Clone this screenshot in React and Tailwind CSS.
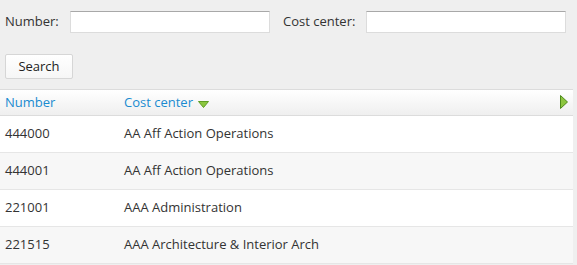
import React from 'react';

const rows = [
  { number: '444000', name: 'AA Aff Action Operations' },
  { number: '444001', name: 'AA Aff Action Operations' },
  { number: '221001', name: 'AAA Administration' },
  { number: '221515', name: 'AAA Architecture & Interior Arch' },
];

const App = () => {
  return (
    <div className="w-[577px] h-[265px] overflow-hidden bg-[#efefef] font-['Open_Sans',sans-serif] text-[13px] text-[#333]">
      {/* Search form */}
      <div className="flex items-center pt-[11px] pl-[5px]">
        <label className="w-[65px]">Number:</label>
        <input
          type="text"
          className="w-[200px] h-[22px] bg-white border border-[#dcdcdc] border-t-[#a8a8a8] outline-none"
        />
        <label className="ml-[13px] w-[83px]">Cost center:</label>
        <input
          type="text"
          className="w-[200px] h-[22px] bg-white border border-[#dcdcdc] border-t-[#a8a8a8] outline-none"
        />
      </div>
      <div className="pl-[5px] pt-[21px]">
        <button className="w-[68px] h-[25px] bg-gradient-to-b from-white to-[#f6f6f6] border border-[#d6d6d6] rounded-[2px] text-[#222]">
          Search
        </button>
      </div>

      {/* Results table */}
      <div className="mt-[10px] w-[573px] border-t border-[#dcdcdc]">
        <div className="flex items-center h-[26px] pt-[1px] bg-gradient-to-b from-white to-[#efefef] border-b border-[#dcdcdc] text-[#1a8bd0]">
          <div className="w-[124px] pl-[5px]">Number</div>
          <div className="flex-1 flex items-center">
            <span>Cost center</span>
            <svg width="11" height="7" viewBox="0 0 11 7" className="ml-[5px] mt-[2px]">
              <polygon points="0.5,0.5 10.5,0.5 5.5,6.5" fill="#8cc63f" stroke="#5f9e23" strokeWidth="1" />
            </svg>
          </div>
          <svg width="8" height="14" viewBox="0 0 8 14" className="mr-[5px] mb-[3px]">
            <polygon points="0.5,0.5 7.5,7 0.5,13.5" fill="#8cc63f" stroke="#4d8a1a" strokeWidth="1" />
          </svg>
        </div>
        {rows.map((row, i) => (
          <div
            key={i}
            className={`flex items-center h-[37px] border-b border-[#e6e6e6] ${i % 2 === 0 ? 'bg-white' : 'bg-[#f7f7f7]'}`}
          >
            <div className="w-[124px] pl-[5px]">{row.number}</div>
            <div className="flex-1">{row.name}</div>
          </div>
        ))}
      </div>
    </div>
  );
};

export default App;
